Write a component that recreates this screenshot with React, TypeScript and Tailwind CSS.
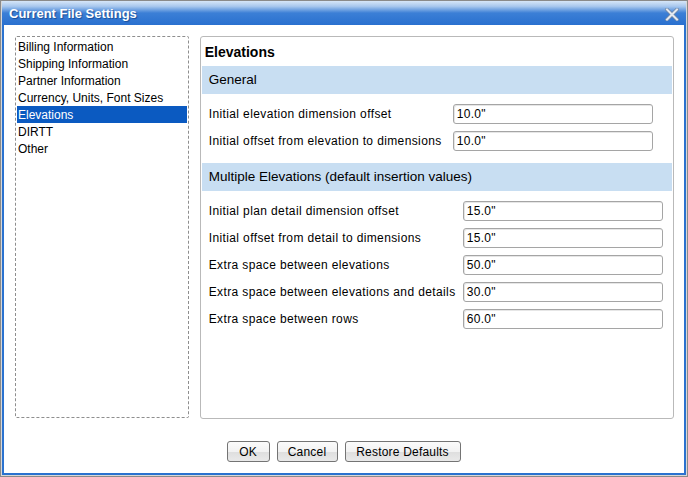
import React from "react";

const font = { fontFamily: '"Liberation Sans", Arial, sans-serif' };

const listItems = [
  "Billing Information",
  "Shipping Information",
  "Partner Information",
  "Currency, Units, Font Sizes",
  "Elevations",
  "DIRTT",
  "Other",
];

function Field({ label, value, inputLeft }: { label: string; value: string; inputLeft: string }) {
  return (
    <div className="flex items-center h-[20px]">
      <div className={`${inputLeft} pl-[7px] text-[12px] tracking-[0.38px] text-black whitespace-nowrap`}>{label}</div>
      <div className="w-[200px] h-[20px] border border-[#a5a5a5] rounded-[3px] bg-white flex items-center pl-[3px] text-[12px] tracking-[0.3px] text-black shadow-[inset_1px_1px_0_#e6e6e6]">
        {value}
      </div>
    </div>
  );
}

function Btn({ children, w }: { children: React.ReactNode; w: string }) {
  return (
    <div
      className={`${w} h-[21px] border border-[#747474] rounded-[3px] flex items-center justify-center text-[12px] tracking-[0.2px] text-black bg-[linear-gradient(#fbfbfb,#f2f2f2_50%,#dedede_51%,#e9e9e9)]`}
    >
      {children}
    </div>
  );
}

export default function App() {
  return (
    <div style={font} className="w-[688px] h-[477px] border border-[#8a8a8a] bg-white flex flex-col">
      <div className="flex-1 flex flex-col border-[#d8d8d8] border-x border-b">
        <div className="flex-1 flex flex-col border-x-2 border-b-2 border-[#2b72cf]">
          {/* title bar */}
          <div className="h-[24px] -mx-[2px] relative flex items-center pl-[7px] pt-[2px] bg-[linear-gradient(180deg,#d6e6f8_0%,#a9c8ee_22%,#3c7fd6_50%,#2a70cf_100%)]">
            <span className="text-white font-bold text-[13px] [text-shadow:1px_1px_1px_#1a4e96]">Current File Settings</span>
            <svg className="absolute right-[7px] top-[7px]" width="14" height="13" viewBox="0 0 14 13">
              <path d="M2 1.5 L12 11.5 M12 1.5 L2 11.5" stroke="#6f86a6" strokeWidth="3.6" strokeLinecap="square" />
              <path d="M2 1.5 L12 11.5 M12 1.5 L2 11.5" stroke="#e4e9f0" strokeWidth="2" strokeLinecap="square" />
            </svg>
          </div>
          {/* body */}
          <div className="flex-1 flex flex-col bg-white pl-[11px] pr-[10px] pt-[11px]">
            <div className="flex gap-[11px]">
              <div className="w-[174px] h-[382px] border border-dashed border-[#8e8e8e] rounded-[2px] p-[1px]">
                {listItems.map((it) => (
                  <div
                    key={it}
                    className={`h-[17px] flex items-center pl-[1px] text-[12px] whitespace-nowrap ${
                      it === "Elevations" ? "bg-[#0b5ac1] text-white" : "text-black"
                    }`}
                  >
                    {it}
                  </div>
                ))}
              </div>
              <div className="w-[475px] h-[383px] border border-[#b9b9b9] rounded-[3px] p-[1px] flex flex-col">
                <div className="h-[28px] flex items-center pl-[3px] text-[14px] font-bold text-black">Elevations</div>
                <div className="h-[28px] bg-[#c8def2] flex items-center pl-[7px] text-[13.5px] text-black">General</div>
                <div className="flex flex-col gap-[7px] pt-[10px]">
                  <Field label="Initial elevation dimension offset" value={'10.0"'} inputLeft="w-[251px]" />
                  <Field label="Initial offset from elevation to dimensions" value={'10.0"'} inputLeft="w-[251px]" />
                </div>
                <div className="h-[28px] mt-[12px] bg-[#c8def2] flex items-center pl-[7px] text-[13.5px] text-black">
                  Multiple Elevations (default insertion values)
                </div>
                <div className="flex flex-col gap-[7px] pt-[10px]">
                  <Field label="Initial plan detail dimension offset" value={'15.0"'} inputLeft="w-[261px]" />
                  <Field label="Initial offset from detail to dimensions" value={'15.0"'} inputLeft="w-[261px]" />
                  <Field label="Extra space between elevations" value={'50.0"'} inputLeft="w-[261px]" />
                  <Field label="Extra space between elevations and details" value={'30.0"'} inputLeft="w-[261px]" />
                  <Field label="Extra space between rows" value={'60.0"'} inputLeft="w-[261px]" />
                </div>
              </div>
            </div>
            <div className="flex justify-center gap-[7px] mt-[22px] pr-[2px]">
              <Btn w="w-[43px]">OK</Btn>
              <Btn w="w-[61px]">Cancel</Btn>
              <Btn w="w-[116px]">Restore Defaults</Btn>
            </div>
          </div>
        </div>
      </div>
    </div>
  );
}
